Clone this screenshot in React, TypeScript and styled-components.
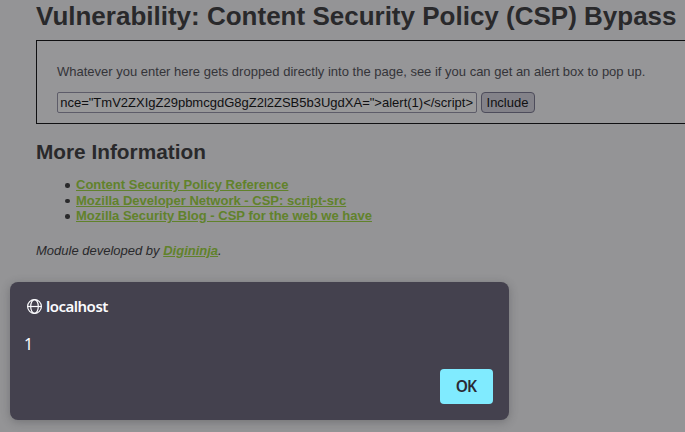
import React from "react";
import styled, { createGlobalStyle } from "styled-components";

const GlobalStyle = createGlobalStyle`
  html, body { margin: 0; padding: 0; }
  body {
    background: #949496;
    color: #29292b;
    font-family: "Liberation Sans", Arial, sans-serif;
    font-size: 13px;
    overflow: hidden;
  }
`;

const Page = styled.main`
  position: relative;
  box-sizing: border-box;
  height: 432px;
  padding-left: 36px;
  overflow: hidden;
`;

const Title = styled.h1`
  margin: 0;
  padding-top: 1px;
  height: 39px;
  font-size: 26px;
  line-height: 30px;
  white-space: nowrap;
`;

const VulnerableArea = styled.section`
  box-sizing: border-box;
  width: 690px;
  height: 84px;
  padding: 23px 20px 0;
  border: 1px solid #101012;
  background: #969698;
`;

const Prompt = styled.p`
  margin: 0 0 12px;
  color: #343438;
  line-height: 16px;
  white-space: nowrap;
`;

const Form = styled.form`
  display: flex;
  gap: 4px;
`;

const TextField = styled.div`
  box-sizing: border-box;
  width: 420px;
  height: 21px;
  padding: 0 3px 0 2px;
  border: 1px solid #5d5c69;
  border-radius: 2px;
  background: #99999a;
`;

const FieldValue = styled.div`
  display: flex;
  justify-content: flex-end;
  color: #101012;
  font-size: 13px;
  line-height: 19px;
  white-space: nowrap;
`;

const IncludeButton = styled.button`
  box-sizing: border-box;
  width: 54px;
  height: 21px;
  padding: 0 1px 0 0;
  border: 1px solid #4d4c5b;
  border-radius: 4px;
  background: #838289;
  color: #101012;
  font: 13px/19px "Liberation Sans", Arial, sans-serif;
`;

const Subtitle = styled.h2`
  margin: 16px 0 13px;
  font-size: 20.8px;
  line-height: 24px;
`;

const LinkList = styled.ul`
  margin: 0;
  padding-left: 29px;
  line-height: 15.6px;
  list-style: none;
`;

const LinkItem = styled.li`
  display: flex;
  align-items: center;
  gap: 6.5px;

  &::before {
    content: "";
    width: 4.5px;
    height: 4.5px;
    margin-top: 1px;
    border-radius: 50%;
    background: #29292b;
  }
`;

const Link = styled.a`
  color: #61822b;
  font-weight: bold;
  text-decoration: underline;
`;

const Credit = styled.p`
  margin: 19px 0 0;
  font-style: italic;
  line-height: 16px;
`;

const Dialog = styled.div`
  position: absolute;
  left: 10px;
  top: 282px;
  box-sizing: border-box;
  width: 499px;
  height: 138px;
  padding: 16px;
  display: flex;
  flex-direction: column;
  border-radius: 8px;
  background: #44414e;
  box-shadow: 0 2px 10px rgba(40, 40, 46, 0.3);
  color: #fbfbfe;
  font-family: "Noto Sans", sans-serif;
  font-size: 15px;
`;

const Origin = styled.div`
  display: flex;
  align-items: center;
  gap: 4px;
  height: 16px;
  padding-left: 1px;
  font-weight: 600;
  letter-spacing: -0.5px;
`;

const Message = styled.div`
  margin: 20px 0 0 -2px;
  font-size: 16px;
  line-height: 20px;
`;

const OkButton = styled.button`
  align-self: flex-end;
  margin-top: auto;
  width: 53px;
  height: 35px;
  padding: 0 1px 0 0;
  border: 0;
  border-radius: 4px;
  background: #80ebff;
  color: #2b2a33;
  font: 600 15.5px/35px "Noto Sans", sans-serif;
  letter-spacing: -0.9px;
`;

const GlobeIcon = () => (
  <svg width="15" height="16" viewBox="0 0 15 16" fill="none" stroke="#fbfbfe" strokeWidth="1.2">
    <circle cx="7.5" cy="8.5" r="6.9" />
    <ellipse cx="7.5" cy="8.5" rx="3.8" ry="6.9" />
    <path d="M0.6 8.5H14.4" />
  </svg>
);

const references = [
  "Content Security Policy Reference",
  "Mozilla Developer Network - CSP: script-src",
  "Mozilla Security Blog - CSP for the web we have",
];

export default function App() {
  return (
    <>
      <GlobalStyle />
      <Page>
        <Title>Vulnerability: Content Security Policy (CSP) Bypass</Title>
        <VulnerableArea>
          <Prompt>
            Whatever you enter here gets dropped directly into the page, see if you can get an alert box to pop up.
          </Prompt>
          <Form>
            <TextField>
              <FieldValue>{'nce="TmV2ZXIgZ29pbmcgdG8gZ2l2ZSB5b3UgdXA=">alert(1)</script>'}</FieldValue>
            </TextField>
            <IncludeButton type="button">Include</IncludeButton>
          </Form>
        </VulnerableArea>
        <Subtitle>More Information</Subtitle>
        <LinkList>
          {references.map((label) => (
            <LinkItem key={label}>
              <Link>{label}</Link>
            </LinkItem>
          ))}
        </LinkList>
        <Credit>
          Module developed by <Link>Digininja</Link>.
        </Credit>
        <Dialog role="alertdialog">
          <Origin>
            <GlobeIcon />
            localhost
          </Origin>
          <Message>1</Message>
          <OkButton>OK</OkButton>
        </Dialog>
      </Page>
    </>
  );
}
